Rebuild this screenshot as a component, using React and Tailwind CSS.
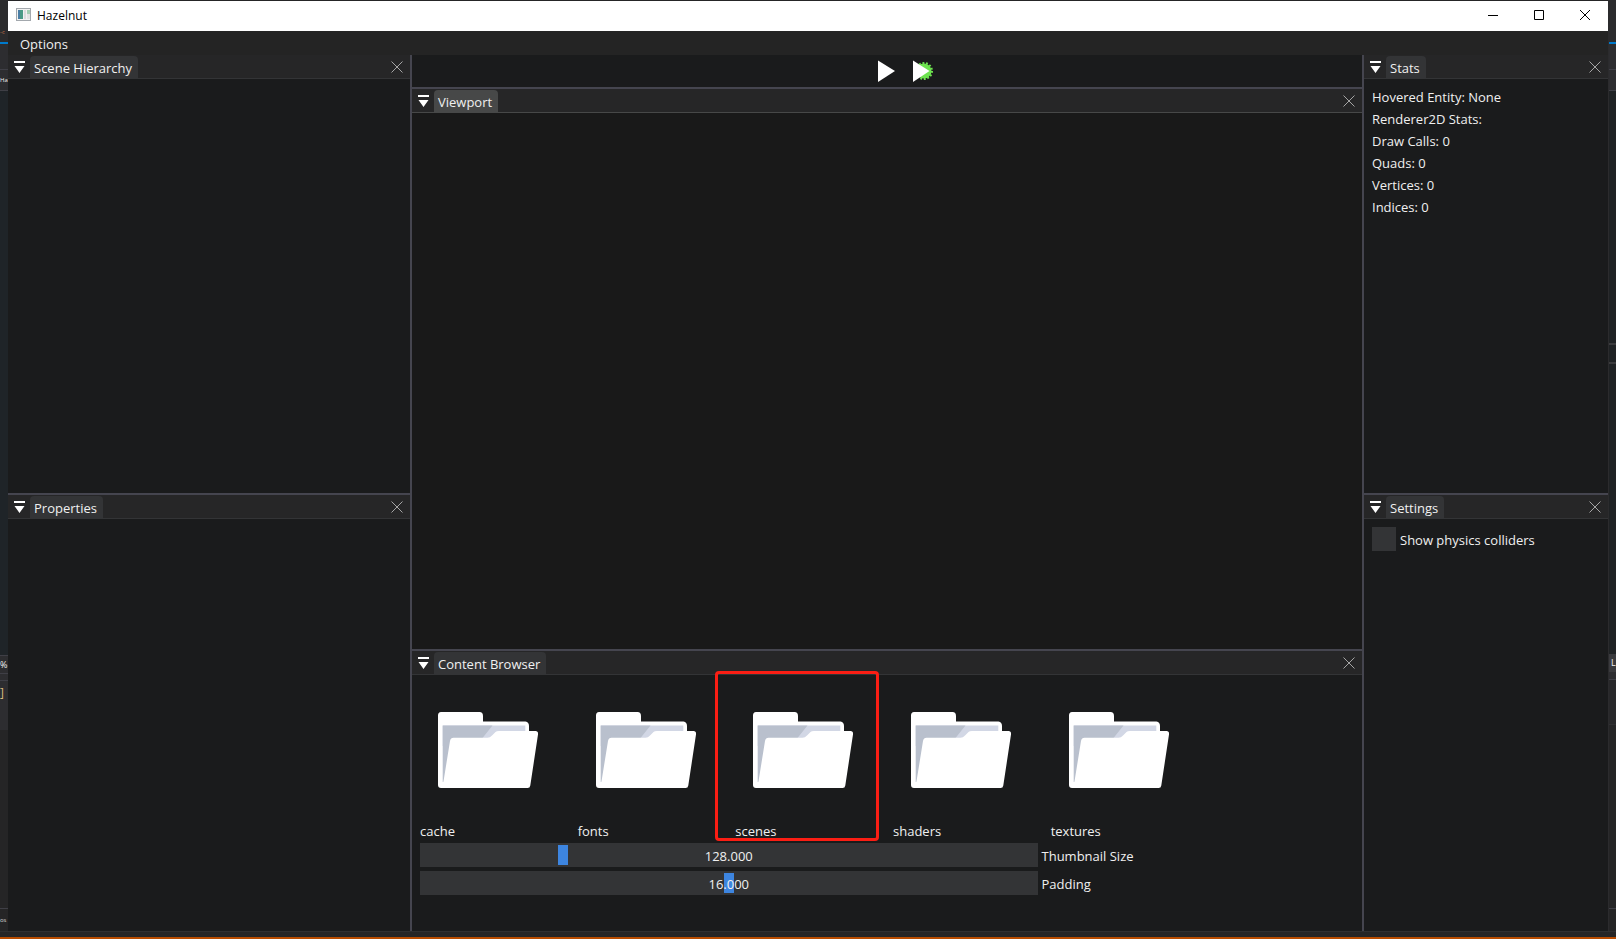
import { useState } from 'react';

const folders = ['cache', 'fonts', 'scenes', 'shaders', 'textures'];

const stats = [
  'Hovered Entity: None',
  'Renderer2D Stats:',
  'Draw Calls: 0',
  'Quads: 0',
  'Vertices: 0',
  'Indices: 0',
];

function AppIcon() {
  return (
    <svg className="w-4 h-4" viewBox="0 0 16 16">
      <rect x="0.5" y="0.5" width="14" height="12" fill="#f2f2f2" stroke="#a3a8ad" />
      <rect x="2" y="2" width="5" height="9" fill="#4b9a86" />
      <rect x="2" y="2" width="2" height="9" fill="#4a7fa5" />
      <rect x="8" y="2" width="2" height="9" fill="#dcdcdc" />
      <rect x="11" y="2" width="3" height="4" fill="#a5cfb4" />
      <rect x="11" y="6" width="3" height="5" fill="#e3e3e3" />
    </svg>
  );
}

function FolderIcon() {
  return (
    <svg className="w-32 h-32" viewBox="0 0 128 128">
      <path
        d="M17 26H55.500Q59 26 59 30V35.500H101.500Q105 36 105 40V60L104 102H17Q14 102 14 99V29.500Q14 26 17 26Z"
        fill="#fff"
      />
      <path d="M18.700 39.500H101.300V60H18.700Z" fill="#d2d7e5" />
      <path d="M18.700 39.500H68.500L58.500 52L40 70L19.500 96H18.700Z" fill="#b9c0cd" />
      <path
        d="M29.500 51.700H63.500Q66 51.700 68 49.500L71.500 46Q72.500 45 75 45H111.500Q114.500 45 114 48.500L106.300 99.500Q106 102 103.500 102H19L19.400 96L26 55Q26.700 51.700 29.500 51.700Z"
        fill="#fff"
      />
    </svg>
  );
}

function PlayIcon() {
  return (
    <svg className="w-7 h-7" viewBox="0 0 28 28">
      <path d="M5 3.500L22 14L5 25Z" fill="#fff" />
    </svg>
  );
}

function SimulateIcon() {
  return (
    <svg className="w-7 h-7" viewBox="0 0 28 28">
      <circle cx="16" cy="14" r="7.500" fill="#6de34f" />
      <circle
        cx="16"
        cy="14"
        r="8"
        fill="none"
        stroke="#6de34f"
        strokeWidth="2"
        strokeDasharray="1.900 1.690"
      />
      <path d="M5 3.500L21.500 14L5 25Z" fill="#fff" />
    </svg>
  );
}

function Panel({ title, focused, className = '', children }) {
  return (
    <section className={`flex flex-col min-h-0 ${className}`}>
      <div
        className={`flex h-6 shrink-0 items-end border-b bg-[#262627] pl-1.5 pr-1.5 ${
          focused ? 'border-[#474848]' : 'border-[#333436]'
        }`}
      >
        <button type="button" aria-label={`${title} menu`} className="self-center mr-[5px]">
          <svg className="w-[11px] h-3" viewBox="0 0 11 12">
            <path d="M0 0H11V2H0ZM0.500 5H10.500L5.500 12Z" fill="#fff" />
          </svg>
        </button>
        <h2
          className={`h-[22px] rounded-t pl-1 pr-1.5 leading-6 ${
            focused ? 'bg-[#474848]' : 'bg-[#333436]'
          }`}
        >
          {title}
        </h2>
        <button type="button" aria-label={`Close ${title}`} className="self-center ml-auto">
          <svg className="w-3.5 h-3.5" viewBox="0 0 14 14">
            <path d="M1.500 1.500L12.500 12.500M12.500 1.500L1.500 12.500" stroke="#a5a5a5" fill="none" />
          </svg>
        </button>
      </div>
      {children}
    </section>
  );
}

function Slider({ id, label, min, max, value, onChange }) {
  return (
    <div className="flex gap-1">
      <div className="relative ml-2 w-[65%] h-6">
        <input
          id={id}
          type="range"
          min={min}
          max={max}
          step="any"
          value={value}
          onChange={(e) => onChange(Number(e.target.value))}
          className="block w-full h-6 px-0.5 appearance-none bg-[#333436] outline-none [&::-webkit-slider-thumb]:appearance-none [&::-webkit-slider-thumb]:w-2.5 [&::-webkit-slider-thumb]:h-5 [&::-webkit-slider-thumb]:bg-[#3d85e0]"
        />
        <span className="absolute inset-0 text-center leading-[26px] pointer-events-none">
          {value.toFixed(3)}
        </span>
      </div>
      <label htmlFor={id} className="h-6 leading-[26px]">{label}</label>
    </div>
  );
}

// Slivers of the editor that sit behind the window
function LeftEdge() {
  return (
    <div className="flex flex-col w-2 shrink-0 bg-[#252526] text-[6px] whitespace-nowrap">
      <div className="h-[42px] pt-6 leading-4 bg-[#2b2b2d] text-[#c8744a]">-c</div>
      <div className="h-0.5 bg-[#007acc]" />
      <div className="h-[26px] bg-[#2d2d30] border-b border-[#3f3f46]" />
      <div className="h-[21px] leading-5 bg-[#2d2d30] border-b border-[#3f3f46]">Ha</div>
      <div className="flex-1 bg-[#1f2428]" />
      <div className="h-[18px] leading-[18px] text-[9px] bg-[#2d2d30] border-t border-[#3f3f46]">%</div>
      <div className="h-2 bg-[#2d2d30] border-y border-[#3f3f46]" />
      <div className="h-[49px] pt-1 leading-4 text-xs bg-[#2d2d30] text-[#d7ba7d]">]</div>
      <div className="h-[179px] border-b border-[#3f3f46]" />
      <div className="h-[22px] leading-[22px] bg-[#252526] text-[#d4d4d4]">os</div>
    </div>
  );
}

function RightEdge() {
  return (
    <div className="flex flex-col w-2 shrink-0 bg-[#252526] border-l border-[#2b2b2d] text-[9px]">
      <div className="h-[42px] bg-[#2b2b2d]" />
      <div className="h-0.5 bg-[#007acc]" />
      <div className="h-[26px] bg-[#2d2d30] border-b border-[#3f3f46]" />
      <div className="h-[21px] bg-[#2d2d30] border-b border-[#3f3f46]" />
      <div className="h-[252px] bg-[#1f2224]" />
      <div className="h-[21px] bg-[#1f2224] border-y-2 border-[#3b3b3d]" />
      <div className="flex-1 bg-[#1f2224]" />
      <div className="h-[18px] pl-0.5 leading-[18px] bg-[#3a3a3d]">L</div>
      <div className="h-2 bg-[#2d2d30] border-b border-[#3f3f46]" />
      <div className="h-[45px] bg-[#28282a] border-b border-[#303032]" />
      <div className="h-[184px] border-b border-[#3f3f46]" />
      <div className="h-[22px]" />
    </div>
  );
}

export default function App() {
  const [thumbnailSize, setThumbnailSize] = useState(128);
  const [padding, setPadding] = useState(16);
  const [showColliders, setShowColliders] = useState(false);

  return (
    <div className="flex flex-col min-h-screen bg-[#252526] font-['Open_Sans',sans-serif] text-[13px] leading-[18px] text-[#f0f0f0]">
      <div className="flex flex-1">
        <LeftEdge />

        <div className="flex flex-col flex-1 min-w-0 pt-px">
          <header className="flex h-[30px] items-center bg-white pl-2 text-black text-xs">
            <AppIcon />
            <h1 className="ml-[5px]">Hazelnut</h1>
            <div className="flex h-7 self-start ml-auto">
              <button type="button" aria-label="Minimize" className="w-[46px] flex items-center justify-center">
                <svg className="w-3 h-3" viewBox="0 0 12 12" stroke="#000" fill="none">
                  <path d="M1 6.500H11" />
                </svg>
              </button>
              <button type="button" aria-label="Maximize" className="w-[46px] flex items-center justify-center">
                <svg className="w-3 h-3" viewBox="0 0 12 12" stroke="#000" fill="none">
                  <path d="M1.500 1.500H10.500V10.500H1.500Z" />
                </svg>
              </button>
              <button type="button" aria-label="Close" className="w-[46px] flex items-center justify-center">
                <svg className="w-3 h-3" viewBox="0 0 12 12" stroke="#000" fill="none">
                  <path d="M1 1L11 11M11 1L1 11" />
                </svg>
              </button>
            </div>
          </header>

          <nav className="flex h-6 items-center bg-[#242424] pl-3 pt-0.5">
            <button type="button">Options</button>
          </nav>

          <main className="flex flex-1 bg-[#1a1b1c]">
            <div className="flex flex-col w-[402px] shrink-0">
              <Panel title="Scene Hierarchy" className="flex-[438]" />
              <div className="h-0.5 bg-[#45454f]" />
              <Panel title="Properties" className="flex-[436]" />
            </div>

            <div className="flex flex-col flex-1 min-w-0 border-x-2 border-[#45454f]">
              <div className="grid grid-cols-[1fr_auto_1fr] gap-[7px] h-8 items-center">
                <span />
                <button type="button" aria-label="Play"><PlayIcon /></button>
                <button type="button" aria-label="Simulate" className="justify-self-start">
                  <SimulateIcon />
                </button>
              </div>
              <div className="h-0.5 bg-[#45454f]" />
              <Panel title="Viewport" focused className="flex-1">
                <div className="flex-1 bg-[#191919]" />
              </Panel>
              <div className="h-0.5 bg-[#45454f]" />
              <Panel title="Content Browser" className="h-[280px]">
                <ul className="grid grid-cols-6 gap-1 pt-2 pl-2">
                  {folders.map((name) => (
                    <li key={name} className="relative">
                      <button type="button" aria-label={name} className="block px-1 py-[3px]">
                        <FolderIcon />
                      </button>
                      <p className="mt-1 leading-5">{name}</p>
                      {name === 'scenes' && (
                        <div className="absolute -top-3 -left-5 w-41 h-[170px] rounded border-3 border-[#fb1e14] pointer-events-none" />
                      )}
                    </li>
                  ))}
                </ul>
                <div className="flex flex-col gap-1 mt-0.5">
                  <Slider
                    id="thumbnail-size"
                    label="Thumbnail Size"
                    min={16}
                    max={512}
                    value={thumbnailSize}
                    onChange={setThumbnailSize}
                  />
                  <Slider
                    id="padding"
                    label="Padding"
                    min={0}
                    max={32}
                    value={padding}
                    onChange={setPadding}
                  />
                </div>
              </Panel>
            </div>

            <div className="flex flex-col w-[244px] shrink-0">
              <Panel title="Stats" className="flex-[438]">
                <ul className="flex flex-col gap-1 p-2 pt-[9px]">
                  {stats.map((line) => (
                    <li key={line}>{line}</li>
                  ))}
                </ul>
              </Panel>
              <div className="h-0.5 bg-[#45454f]" />
              <Panel title="Settings" className="flex-[436]">
                <label className="flex gap-1 p-2 leading-[26px]">
                  <input
                    type="checkbox"
                    checked={showColliders}
                    onChange={(e) => setShowColliders(e.target.checked)}
                    className="w-6 h-6 appearance-none bg-[#333436] checked:bg-[#3d85e0]"
                  />
                  Show physics colliders
                </label>
              </Panel>
            </div>
          </main>
        </div>

        <RightEdge />
      </div>
      <div className="h-2 bg-[#252526] border-t border-b-2 border-t-[#2f2f31] border-b-[#b84c00]" />
    </div>
  );
}
